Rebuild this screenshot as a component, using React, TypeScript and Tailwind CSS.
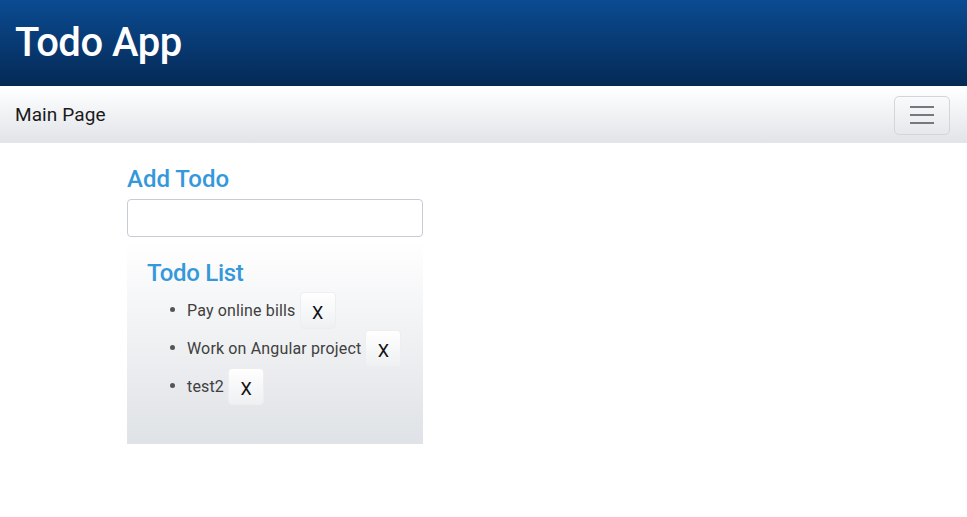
import React from "react";

const todos = ["Pay online bills", "Work on Angular project", "test2"];

export default function App() {
  return (
    <div className="min-h-[517px] bg-white" style={{ fontFamily: 'Roboto, "Liberation Sans", Arial, sans-serif' }}>
      <header className="h-[86px] bg-gradient-to-b from-[#0b4b92] to-[#052a56] flex items-center px-[15px]">
        <h1 className="text-[40px] leading-none text-white font-medium tracking-[-0.5px]">Todo App</h1>
      </header>
      <nav className="mt-px h-[56px] bg-gradient-to-b from-white to-[#e1e4e8] flex items-center justify-between pl-[15px] pr-[17px]">
        <span className="text-[19px] text-[#1a1a1a] tracking-[0.1px]">Main Page</span>
        <button className="w-[56px] h-[39px] border border-[#d2d5d9] rounded-[5px] flex flex-col items-center justify-center gap-[6px]">
          <span className="block w-[24px] h-[2px] bg-[#76797c]" />
          <span className="block w-[24px] h-[2px] bg-[#76797c]" />
          <span className="block w-[24px] h-[2px] bg-[#76797c]" />
        </button>
      </nav>
      <main className="pl-[127px] pt-[22px]">
        <div className="w-[296px]">
          <h2 className="text-[24px] leading-[29px] text-[#3498db] font-medium mb-[5px]">Add Todo</h2>
          <input className="block w-full h-[38px] border border-[#c5ccd3] rounded-[4px] bg-white px-3 outline-none" />
          <section className="mt-[4px] bg-gradient-to-b from-white to-[#dfe2e6] pl-[20px] pt-[18px] pb-[38px]">
            <h2 className="text-[24px] leading-[29px] text-[#3498db] font-medium mb-[4px] tracking-[-0.3px]">Todo List</h2>
            <ul className="list-disc pl-[40px] text-[16px] text-[#404040] marker:text-[#555] tracking-[0.15px]">
              {todos.map((t) => (
                <li key={t} className="h-[38px]">
                  <span className="align-middle">{t}</span>{" "}
                  <button className="align-middle w-[36px] h-[37px] rounded-[4px] border border-[#eceef0] bg-gradient-to-b from-white to-[#eef0f2] text-[18px] text-[#111] pt-[3px] tracking-normal">
                    X
                  </button>
                </li>
              ))}
            </ul>
          </section>
        </div>
      </main>
    </div>
  );
}
